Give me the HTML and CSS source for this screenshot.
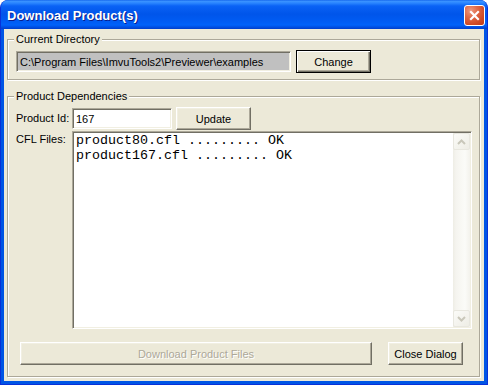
FILE: index.html
```html
<!DOCTYPE html>
<html lang="en">
<head>
    <meta charset="UTF-8">
    <meta name="viewport" content="width=device-width, initial-scale=1.0">
    <title>Download Product(s)</title>
    <link rel="stylesheet" href="styles.css">
</head>
<body>
    <div class="window">
        <div class="titlebar">
            <span class="title">Download Product(s)</span>
            <button type="button" class="close-btn" aria-label="Close">
                <svg width="11" height="11" viewBox="0 0 11 11">
                    <path d="M2 2 L9 9 M9 2 L2 9" stroke="#fff" stroke-width="2.2" stroke-linecap="square" fill="none"/>
                </svg>
            </button>
        </div>

        <div class="client">
            <!-- Current directory -->
            <div class="group group-dir">
                <div class="group-title">Current Directory</div>
                <div class="dir-row">
                    <input type="text" class="field field-readonly" value="C:\Program Files\ImvuTools2\Previewer\examples" readonly>
                    <button type="button" class="btn btn-default btn-change">Change</button>
                </div>
            </div>

            <!-- Product dependencies -->
            <div class="group group-deps">
                <div class="group-title">Product Dependencies</div>
                <div class="form-grid">
                    <label for="productId" class="form-label">Product Id:</label>
                    <div class="id-row">
                        <input type="text" class="field field-id" id="productId" value="167">
                        <button type="button" class="btn btn-update">Update</button>
                    </div>

                    <label class="form-label form-label-top">CFL Files:</label>
                    <div class="textbox">
                        <div class="textbox-content">product80.cfl ......... OK
product167.cfl ......... OK</div>
                        <div class="scrollbar">
                            <div class="scroll-btn">
                                <svg width="9" height="6" viewBox="0 0 9 6"><path d="M1 5 L4.5 1.5 L8 5" stroke="#C9C7BA" stroke-width="2" fill="none"/></svg>
                            </div>
                            <div class="scroll-track"></div>
                            <div class="scroll-btn">
                                <svg width="9" height="6" viewBox="0 0 9 6"><path d="M1 1 L4.5 4.5 L8 1" stroke="#C9C7BA" stroke-width="2" fill="none"/></svg>
                            </div>
                        </div>
                    </div>
                </div>

                <div class="actions">
                    <button type="button" class="btn btn-download" disabled>Download Product Files</button>
                    <button type="button" class="btn btn-close">Close Dialog</button>
                </div>
            </div>
        </div>
    </div>
</body>
</html>
```

FILE: styles.css
```css
body {
    margin: 0;
    padding: 0;
    background-color: #fff;
    font-family: "Liberation Sans", Arial, sans-serif;
    font-size: 11px;
    color: #000;
}

.window {
    width: 488px;
    height: 385px;
    box-sizing: border-box;
    display: flex;
    flex-direction: column;
    background-color: #0055E5;
    border: 1px solid #0831D9;
    border-top: 0;
    border-radius: 8px 8px 0 0;
    overflow: hidden;
}

/* title bar */
.titlebar {
    height: 29px;
    flex-shrink: 0;
    display: flex;
    align-items: flex-start;
    justify-content: space-between;
    padding: 0 3px 0 6px;
    margin: 0 -1px;
    background: linear-gradient(to bottom,
        #0A5AE8 0px, #3D95FF 1px, #2B86FF 3px, #0A62F5 6px,
        #0055EA 14px, #005CF4 22px, #0062FA 25px, #0050E4 27px, #003ECB 29px);
}

.title {
    margin-top: 8px;
    margin-left: 1px;
    font-family: "Liberation Sans", Arial, sans-serif;
    font-weight: bold;
    font-size: 13px;
    line-height: 15px;
    color: #fff;
    text-shadow: 1px 1px 0 #0A1E8C;
}

.close-btn {
    margin-top: 5px;
    width: 21px;
    height: 21px;
    padding: 0;
    display: flex;
    align-items: center;
    justify-content: center;
    border: 1px solid #fff;
    border-radius: 3px;
    background: radial-gradient(circle at 30% 25%, #EE9A80 0, #E06A48 35%, #CF4A26 70%, #BE3A18 100%);
}

/* client area */
.client {
    flex: 1;
    margin: 0 3px 3px;
    padding: 10px 4px 4px 3px;
    background-color: #ECE9D8;
    display: flex;
    flex-direction: column;
}

.group {
    border: 1px solid #ACA899;
    box-shadow: inset 1px 1px 0 #fff, 1px 1px 0 #fff;
}

.group-title {
    width: fit-content;
    margin: -7px 0 0 6px;
    padding: 0 2px;
    line-height: 13px;
    background-color: #ECE9D8;
}

.group-dir {
    padding-bottom: 6px;
}

.dir-row {
    display: flex;
    align-items: center;
    gap: 5px;
    margin-top: 4px;
    padding-left: 8px;
}

.group-deps {
    margin-top: 16px;
    padding-bottom: 11px;
}

/* inputs */
.field {
    box-sizing: border-box;
    height: 21px;
    margin: 0;
    padding: 0 0 0 3px;
    font-family: "Liberation Sans", Arial, sans-serif;
    font-size: 11px;
    color: #000;
    background-color: #fff;
    border: 1px solid;
    border-color: #ACA899 #fff #fff #ACA899;
    box-shadow: inset 1px 1px 0 #716F64, inset -1px -1px 0 #F1EFE2;
    outline: none;
}

.field-readonly {
    width: 275px;
    background-color: #C0C0C0;
}

.field-id {
    width: 100px;
}

/* buttons */
.btn {
    box-sizing: border-box;
    height: 23px;
    margin: 0;
    padding: 0;
    font-family: "Liberation Sans", Arial, sans-serif;
    font-size: 11px;
    color: #000;
    background-color: #ECE9D8;
    border: 1px solid;
    border-color: #fff #716F64 #716F64 #fff;
    box-shadow: inset -1px -1px 0 #ACA899, inset 1px 1px 0 #F1EFE2;
}

.btn-default {
    border-color: #000;
    box-shadow: inset 1px 1px 0 #fff, inset -1px -1px 0 #716F64, inset -2px -2px 0 #ACA899;
}

.btn-change,
.btn-close {
    width: 75px;
}

.btn-update {
    width: 75px;
}

.btn:disabled {
    color: #ACA899;
    text-shadow: 1px 1px 0 #fff;
}

.btn-download {
    width: 352px;
}

/* product dependencies */
.form-grid {
    display: grid;
    grid-template-columns: 56px 400px;
    row-gap: 1px;
    margin-top: 4px;
    padding-left: 8px;
}

.form-label {
    align-self: center;
    line-height: 13px;
}

.form-label-top {
    align-self: start;
    padding-top: 2px;
}

.id-row {
    display: flex;
    align-items: center;
    gap: 4px;
}

.textbox {
    box-sizing: border-box;
    height: 198px;
    display: flex;
    background-color: #fff;
    border: 1px solid;
    border-color: #ACA899 #fff #fff #ACA899;
    box-shadow: inset 1px 1px 0 #716F64, inset -1px -1px 0 #F1EFE2;
    padding: 1px;
}

.textbox-content {
    flex: 1;
    padding: 0 2px;
    font-family: "Liberation Mono", "Courier New", monospace;
    font-size: 13.33px;
    line-height: 15px;
    white-space: pre;
}

.scrollbar {
    width: 17px;
    display: flex;
    flex-direction: column;
    background: linear-gradient(to right, #EEEDE5 0, #F5F4EF 3px, #FBFBF8 12px, #F3F2EC 17px);
}

.scroll-btn {
    box-sizing: border-box;
    height: 17px;
    display: flex;
    align-items: center;
    justify-content: center;
    border: 1px solid #E8E7DF;
    border-radius: 2px;
    background: linear-gradient(to bottom right, #FBFBF8, #EEEDE5);
}

.scroll-track {
    flex: 1;
}

.actions {
    display: flex;
    gap: 16px;
    margin-top: 13px;
    padding-left: 12px;
}
```
